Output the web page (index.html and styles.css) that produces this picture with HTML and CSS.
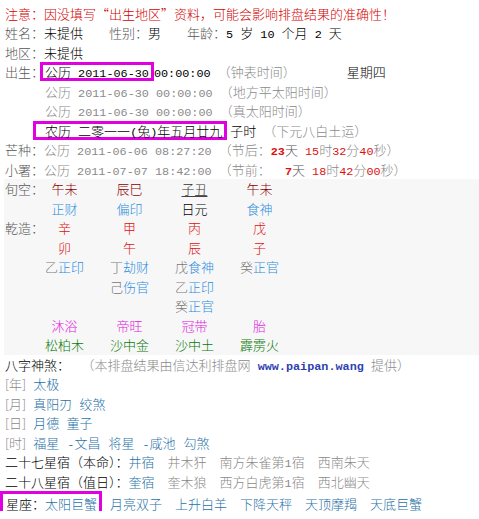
FILE: index.html
```html
<!DOCTYPE html>
<html lang="zh-CN">
<head>
<meta charset="utf-8">
<link rel="stylesheet" href="styles.css">
</head>
<body>
<div class="page">
  <div class="row warn">注意：因没填写“出生地区”资料，可能会影响排盘结果的准确性！</div>
  <div class="row"><span class="lbl">姓名：</span>未提供<span class="sp2"></span><span class="lbl">性别：</span>男<span class="sp2"></span><span class="lbl">年龄：</span><span class="m">5 </span>岁<span class="m"> 10 </span>个月<span class="m"> 2 </span>天</div>
  <div class="row"><span class="lbl">地区：</span>未提供</div>
  <div class="row"><span class="lbl">出生：</span><span class="box box-a">公历<span class="m"> 2011-06-30</span></span><span class="m">00:00:00 </span><span class="gray">（钟表时间）</span><span class="week">星期四</span></div>
  <div class="row indent gray">公历<span class="m"> 2011-06-30 00:00:00 </span>（地方平太阳时间）</div>
  <div class="row indent gray">公历<span class="m"> 2011-06-30 00:00:00 </span>（真太阳时间）</div>
  <div class="row"><span class="box box-b">农历<span class="m"> </span>二零一一<span class="m">(</span>兔<span class="m">)</span>年五月廿九</span> 子时<span class="gray"><span class="m"> </span>（下元八白土运）</span></div>
  <div class="row gray"><span class="lbl">芒种：</span>公历<span class="m"> 2011-06-06 08:27:20 </span>（节后：<b class="m red">23</b><span class="dk">天</span><span class="m red"> 15</span>时<span class="m red">32</span>分<span class="m red">40</span>秒）</div>
  <div class="row gray"><span class="lbl">小署：</span>公历<span class="m"> 2011-07-07 18:42:00 </span>（节前：<b class="m red">  7</b><span class="dk">天</span><span class="m red"> 18</span>时<span class="m red">42</span>分<span class="m red">00</span>秒）</div>

  <div class="pan">
    <div class="plbl">旬空：</div><div class="dred">午未</div><div class="dred">辰巳</div><div class="void">子丑</div><div class="dred">午未</div>
    <div></div><div class="blue">正财</div><div class="blue">偏印</div><div>日元</div><div class="blue">食神</div>
    <div class="plbl">乾造：</div><div class="red">辛</div><div class="red">甲</div><div class="red">丙</div><div class="red">戊</div>
    <div></div><div class="red">卯</div><div class="red">午</div><div class="red">辰</div><div class="red">子</div>
    <div></div><div><span class="stem">乙</span><span class="blue">正印</span></div><div><span class="stem">丁</span><span class="blue">劫财</span></div><div><span class="stem">戊</span><span class="blue">食神</span></div><div><span class="stem">癸</span><span class="blue">正官</span></div>
    <div></div><div></div><div><span class="stem">己</span><span class="blue">伤官</span></div><div><span class="stem">乙</span><span class="blue">正印</span></div><div></div>
    <div></div><div></div><div></div><div><span class="stem">癸</span><span class="blue">正官</span></div><div></div>
    <div></div><div class="mag">沐浴</div><div class="mag">帝旺</div><div class="mag">冠带</div><div class="mag">胎</div>
    <div></div><div class="grn">松柏木</div><div class="grn">沙中金</div><div class="grn">沙中土</div><div class="grn">霹雳火</div>
  </div>

  <div class="row sha">八字神煞：<span class="gray note">（本排盘结果由信达利排盘网<span class="m"> </span><span class="m url">www.paipan.wang</span><span class="m"> </span>提供）</span></div>
  <div class="row"><span class="gray">[年]</span><span class="m"> </span><span class="link">太极</span></div>
  <div class="row"><span class="gray">[月]</span><span class="m"> </span><span class="link">真阳刃<span class="m"> </span>绞煞</span></div>
  <div class="row"><span class="gray">[日]</span><span class="m"> </span><span class="link">月德<span class="m"> </span>童子</span></div>
  <div class="row"><span class="gray">[时]</span><span class="m"> </span><span class="link">福星<span class="sg"></span><span class="m">-</span>文昌<span class="sg"></span>将星<span class="sg"></span><span class="m">-</span>咸池<span class="sg"></span>勾煞</span></div>
  <div class="row">二十七星宿（本命）：<span class="link">井宿</span><span class="gray"><span class="gap"></span>井木犴<span class="gap"></span>南方朱雀第<span class="m">1</span>宿<span class="gap"></span>西南朱天</span></div>
  <div class="row">二十八星宿（值日）：<span class="link">奎宿</span><span class="gray"><span class="gap"></span>奎木狼<span class="gap"></span>西方白虎第<span class="m">1</span>宿<span class="gap"></span>西北幽天</span></div>
  <div class="row stars"><span class="box box-c">星座：<span class="link">太阳巨蟹</span></span><span class="link star first">月亮双子</span><span class="link star">上升白羊</span><span class="link star">下降天秤</span><span class="link star">天顶摩羯</span><span class="link star">天底巨蟹</span></div>
</div>
</body>
</html>
```

FILE: styles.css
```css
html, body {
  margin: 0;
  padding: 0;
  background: #ffffff;
}
body {
  font-family: "Noto Sans CJK SC", sans-serif;
  font-size: 13px;
  font-weight: 300;
  line-height: 19.5px;
  color: #000000;
}
.page {
  padding-top: 3.5px;
}
.row {
  padding-left: 5px;
  white-space: pre;
  height: 19.5px;
}
.m {
  font-family: "Liberation Mono", monospace;
  font-size: 11.8px;
  font-weight: normal;
  white-space: pre;
}
b.m {
  font-weight: bold;
}
.lbl {
  color: #555555;
}
.warn {
  color: #d40000;
}
.gray {
  color: #8a8a8a;
}
.dk {
  color: #555555;
}
.red {
  color: #dd1111;
}
.sp2 {
  display: inline-block;
  width: 26px;
}
.sg {
  display: inline-block;
  width: 8px;
}
.indent {
  padding-left: 45px;
}
.week {
  margin-left: 51px;
  color: #000000;
}
.box {
  display: inline-block;
  border: 3px solid #e000e0;
  line-height: 13px;
  height: 13px;
}
.box-a {
  margin-left: -4px;
  padding: 0 2px 0 2px;
}
.box-b {
  margin-left: 28px;
  padding: 0 2px 0 9px;
}
.box-c {
  margin-left: -5px;
  padding: 3px 2px 3px 3px;
}
.pan {
  display: grid;
  grid-template-columns: 27px repeat(4, 65px);
  grid-auto-rows: 19.5px;
  background: #f7f7f7;
  margin-left: 4px;
  padding-left: 1px;
}
.pan > div {
  text-align: center;
  white-space: nowrap;
}
.pan > .plbl {
  text-align: left;
  color: #555555;
}
.dred {
  color: #8b0000;
}
.void {
  color: #333333;
  text-decoration: underline;
  text-decoration-color: #444444;
  text-decoration-thickness: 1px;
  text-underline-offset: 2px;
}
.blue {
  color: #2d8ee0;
}
.stem {
  color: #777777;
}
.mag {
  color: #e020e0;
}
.grn {
  color: #087a08;
}
.note {
  margin-left: 18px;
}
.url {
  color: #2f3fb0;
  font-weight: bold;
}
.link {
  color: #2a72a8;
}
.gap {
  display: inline-block;
  width: 13px;
}
.star {
  margin-left: 13px;
}
.star.first {
  margin-left: 8px;
}
```
